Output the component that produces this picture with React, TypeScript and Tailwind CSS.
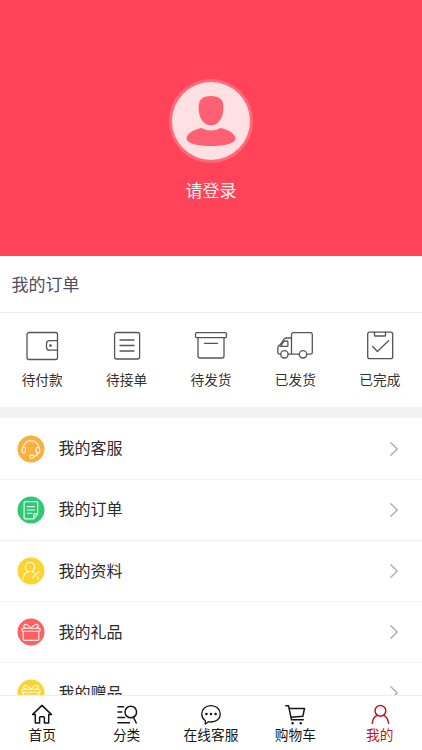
import type { ReactNode } from 'react';

const line = {
  fill: 'none',
  stroke: 'currentColor',
  strokeLinecap: 'round',
  strokeLinejoin: 'round',
} as const;

function OrderIcon({ children }: { children: ReactNode }) {
  return (
    <svg viewBox="0 0 40 32" className="h-8 w-10 text-[#555]" {...line} strokeWidth={1.3}>
      {children}
    </svg>
  );
}

function RoundIcon({ color, children }: { color: string; children: ReactNode }) {
  return (
    <svg viewBox="0 0 28 28" className="h-7 w-7 shrink-0 text-white" {...line} strokeWidth={1.15}>
      <circle cx="14" cy="14" r="13.5" fill={color} stroke="none" />
      <g opacity="0.9">{children}</g>
    </svg>
  );
}

const gift = (
  <>
    <rect x="5" y="10.2" width="18" height="3.1" rx="0.8" />
    <path d="M6.2 13.3V21.3q0 1 1 1h13.600q1 0 1-1V13.300M14 10.200C11.500 6.800 8.200 5.200 7 7.200C6.200 8.700 7.500 9.800 9 10.200M14 10.200C16.500 6.800 19.800 5.200 21 7.200C21.800 8.700 20.500 9.800 19 10.200" />
  </>
);

const orders = [
  {
    label: '待付款',
    icon: (
      <>
        <rect x="5" y="2.5" width="30.5" height="27" rx="2" />
        <path d="M35.5 10.7h-8q-3 0-3 3v3.5q0 3 3 3h8" />
        <circle cx="28.5" cy="15.6" r="0.7" fill="currentColor" />
      </>
    ),
  },
  {
    label: '待接单',
    icon: (
      <>
        <rect x="7.6" y="2.5" width="25" height="26.5" rx="2" />
        <path d="M13 10h14M13 15.5h14M13 21h14" />
      </>
    ),
  },
  {
    label: '待发货',
    icon: (
      <>
        <rect x="4.5" y="2.7" width="31" height="5" rx="1.2" />
        <path d="M7 7.700v18.300q0 2 2 2h22q2 0 2-2v-18.300M13.500 13.300h13" />
      </>
    ),
  },
  {
    label: '已发货',
    icon: (
      <>
        <path d="M16.5 24.2V4.500q0-1.800 1.800-1.800h17.200q1.800 0 1.800 1.800v17.900q0 1.800-1.800 1.800h-3.800M16.500 8h-5q-1.500 0-2.400 1.200l-3.800 5.500q-2.500 1-2.500 3v4.800q0 1.700 1.700 1.700h1.200M13.100 24.200h11.200" />
        <path d="M6.300 15.300l2.300-3.600q.5-.7 1.400-.7h2q.9 0 .9.900v3.500q0 .9-.9.900H5" />
        <circle cx="9.4" cy="24.300" r="3.7" />
        <circle cx="28" cy="24.300" r="3.7" />
      </>
    ),
  },
  {
    label: '已完成',
    icon: (
      <>
        <rect x="7.7" y="2.2" width="25" height="26.5" rx="2" />
        <path d="M14.5 2.2v3.200q0 .6.600.6h9.800q.6 0 .6-.6V2.200M12.500 16.200l4.900 5.300L28.500 10.700" />
      </>
    ),
  },
];

const menu = [
  {
    label: '我的客服',
    color: '#fdb03e',
    icon: (
      <>
        <path d="M6.2 12.200a7.900 7.900 0 0 1 15.600 0M21 18q-.8 2.800-4.300 3.500" />
        <rect x="5.1" y="12.3" width="3.400" height="5.7" rx="1.4" />
        <rect x="19.2" y="12.3" width="3.400" height="5.7" rx="1.4" />
        <rect x="12.700" y="20.100" width="4" height="2.900" rx="1" />
      </>
    ),
  },
  {
    label: '我的订单',
    color: '#31c873',
    icon: (
      <>
        <path d="M20.700 17.800V6.500q0-.9-.9-.9H8q-.9 0-.9.900v15.400q0 .9.900.9h8.800M16.800 22.800v-4.200q0-.8.800-.8h3.100zM10.300 10.600h7.200M10.300 14h7.200M10.300 17.400h4.500" />
      </>
    ),
  },
  {
    label: '我的资料',
    color: '#fdd330',
    icon: (
      <>
        <circle cx="13" cy="10" r="4.7" />
        <path d="M6.200 22.500c.2-4.500 2.200-7 5-7.900M14.800 14.600q1.700.4 3 1.600M15.700 20.600l6.800-6.400M20.200 19.600q1.200 1.300 1.300 2.900" />
      </>
    ),
  },
  { label: '我的礼品', color: '#fb6063', icon: gift },
  {
    label: '我的赠品',
    color: '#fdd330',
    icon: (
      <>
        {gift}
        <path d="M6.200 16.300h15.600" />
      </>
    ),
  },
];

const tabs = [
  {
    label: '首页',
    icon: <path d="M2.700 12.400L12 3.400l9.300 9H18.700v8.700h-4.300v-5.600q0-.8-.8-.8h-3.200q-.8 0-.8.800v5.600H5.300v-8.700z" />,
  },
  {
    label: '分类',
    icon: (
      <>
        <circle cx="15.8" cy="10" r="5.8" />
        <path d="M18.600 15.500l2.600 5.500M3 4.700h5.500M3 10.100h3.800M3 15.500h6.500M3 20.800h11.500" />
      </>
    ),
  },
  {
    label: '在线客服',
    icon: (
      <>
        <path d="M6 18.500Q2.700 16 2.700 12C2.700 7.200 6.700 3.600 12 3.600s9.300 3.600 9.300 8.400-4 8-9.300 8c-1 0-1.800-.1-2.600-.3L6.300 22V18.700" strokeWidth={1.3} />
        <path d="M7.400 12h.01M12 12h.01M16.600 12h.01" strokeWidth={2.6} />
      </>
    ),
  },
  {
    label: '购物车',
    icon: (
      <>
        <path d="M2.800 3.700h2.700l3 14.100h11.800M6.200 6.500h15.300l-1.700 7.800L8 15.200" />
        <path d="M9.600 21.200h.01M17.700 21.200h.01" strokeWidth={2.5} />
      </>
    ),
  },
  {
    label: '我的',
    active: true,
    icon: (
      <>
        <circle cx="12.400" cy="8.800" r="5.400" />
        <path d="M4.300 21.300c.2-3.400 1.700-6.300 4.600-7.900M15.900 13.400c2.900 1.600 4.400 4.500 4.600 7.900" />
      </>
    ),
  },
];

export default function App() {
  return (
    <div className="flex h-[750px] w-[422px] flex-col overflow-hidden bg-white font-['Noto_Sans_CJK_SC','Liberation_Sans',sans-serif] text-[#333]">
      <header className="flex h-[256px] shrink-0 flex-col items-center bg-[#ff4459] pt-[79px]">
        <svg viewBox="0 0 84 84" className="h-[84px] w-[84px]">
          <circle cx="42" cy="42" r="42" fill="#ff6a7b" />
          <circle cx="42" cy="42" r="39" fill="#ffe0e3" />
          <path
            fill="#ff6073"
            d="M42 17C50.500 17 54.400 20.500 54.400 28.500C54.400 39 49.500 46.300 42 46.300S29.600 39 29.600 28.500C29.600 20.500 33.500 17 42 17z"
          />
          <path
            fill="#ff6073"
            d="M32.500 49Q37 51.600 42 51.600T51.500 49C58 50.200 66.500 54.500 66.500 59.500C66.500 64.500 55 67 42 67S17.500 64.500 17.500 59.500C17.500 54.500 26 50.200 32.500 49z"
          />
        </svg>
        <span className="mt-[15px] text-[17px] leading-6 text-[#fff0f1]">请登录</span>
      </header>

      <section className="shrink-0">
        <h2 className="flex h-[57px] items-center border-b border-[#eee] pl-[11.500px] text-[17px] text-[#544c5c]">
          我的订单
        </h2>
        <div className="grid h-[94px] grid-cols-5 pt-[17px]">
          {orders.map((o) => (
            <div key={o.label} className="flex flex-col items-center">
              <OrderIcon>{o.icon}</OrderIcon>
              <span className="mt-[7px] text-[13.7px] leading-5">{o.label}</span>
            </div>
          ))}
        </div>
      </section>

      <div className="h-[11px] shrink-0 bg-[#f2f2f2]" />

      <main className="min-h-0 flex-1 overflow-hidden pt-[0.6px]">
        {menu.map((m) => (
          <div key={m.label} className="flex h-[61.2px] items-center border-b border-[#f2f2f2] pl-[16.5px] pr-[23px]">
            <RoundIcon color={m.color}>{m.icon}</RoundIcon>
            <span className="ml-[14px] flex-1 pb-[3px] text-[16px] leading-6 text-[#2c2c2c]">{m.label}</span>
            <svg viewBox="0 0 10 16" className="h-4 w-2.5 text-[#aaa]" {...line} strokeWidth={1.3}>
              <path d="M1.800 1.800L8.200 8l-6.400 6.200" />
            </svg>
          </div>
        ))}
      </main>

      <nav className="grid h-[55px] shrink-0 grid-cols-5 border-t border-[#eee] bg-white pt-[6px]">
        {tabs.map((t) => (
          <div key={t.label} className={`flex flex-col items-center ${t.active ? 'text-[#b8191f]' : 'text-[#151515]'}`}>
            <svg viewBox="0 0 24 24" className="h-6 w-6" {...line} strokeWidth={1.5}>
              {t.icon}
            </svg>
            <span className="-mt-0.5 text-[13.7px] leading-5">{t.label}</span>
          </div>
        ))}
      </nav>
    </div>
  );
}
